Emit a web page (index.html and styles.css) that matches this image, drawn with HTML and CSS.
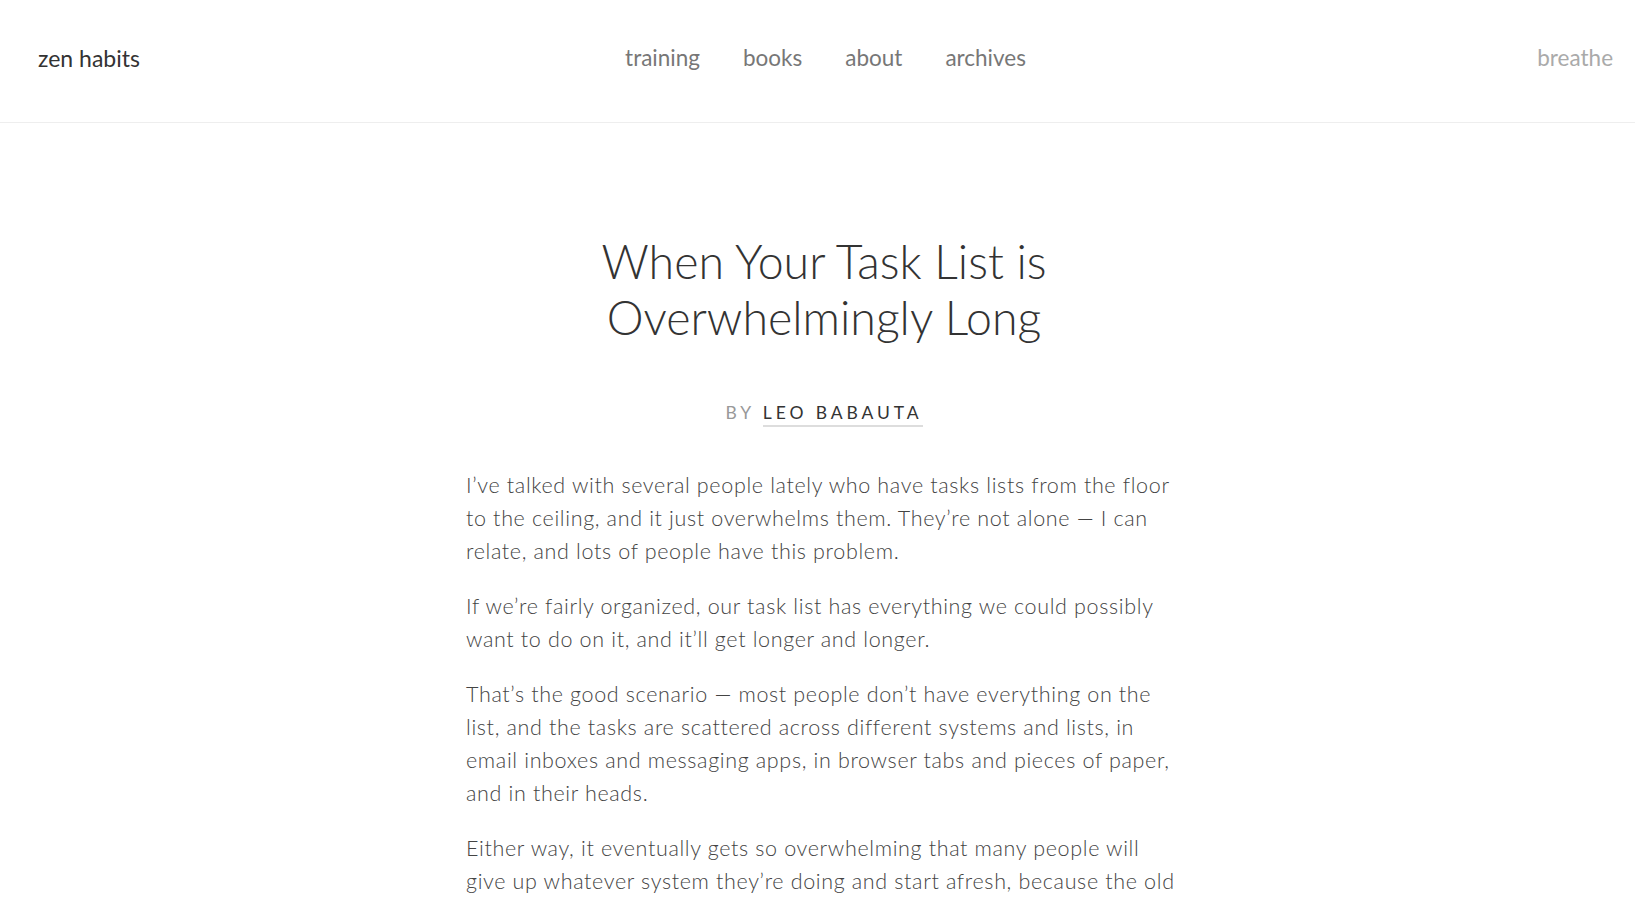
FILE: index.html
```html
<!DOCTYPE html>
<html lang="en">
<head>
<meta charset="utf-8">
<title>When Your Task List is Overwhelmingly Long</title>
<link rel="stylesheet" href="styles.css">
</head>
<body>
<header class="site-header">
  <a class="logo" href="#">zen habits</a>
  <nav class="main-nav">
    <a href="#">training</a>
    <a href="#">books</a>
    <a href="#">about</a>
    <a href="#">archives</a>
  </nav>
  <a class="breathe" href="#">breathe</a>
</header>
<main class="post">
  <h1 class="post-title">When Your Task List is<br>Overwhelmingly Long</h1>
  <p class="byline"><span class="by">BY</span> <a href="#">LEO BABAUTA</a></p>
  <div class="post-body">
    <p>I’ve talked with several people lately who have tasks lists from the floor<br>to the ceiling, and it just overwhelms them. They’re not alone — I can<br>relate, and lots of people have this problem.</p>
    <p>If we’re fairly organized, our task list has everything we could possibly<br>want to do on it, and it’ll get longer and longer.</p>
    <p>That’s the good scenario — most people don’t have everything on the<br>list, and the tasks are scattered across different systems and lists, in<br>email inboxes and messaging apps, in browser tabs and pieces of paper,<br>and in their heads.</p>
    <p>Either way, it eventually gets so overwhelming that many people will<br>give up whatever system they’re doing and start afresh, because the old</p>
  </div>
</main>
</body>
</html>
```
FILE: styles.css
```css
html, body {
  margin: 0;
  padding: 0;
  background: #fff;
}
body {
  font-family: "Lato", "Open Sans", sans-serif;
  color: #444;
  overflow: hidden;
  height: 905px;
}
a {
  text-decoration: none;
  color: inherit;
}
.site-header {
  display: flex;
  align-items: center;
  height: 114px;
  padding: 0 22px 8px 38px;
  border-bottom: 1px solid #eeeeee;
}
.logo {
  flex: 1;
  font-size: 23px;
  color: #333;
  margin-top: 2px;
}
.main-nav {
  display: flex;
  gap: 43px;
  font-size: 22.5px;
  color: #777;
}
.breathe {
  flex: 1;
  text-align: right;
  font-size: 22.5px;
  color: #aaa;
}
.post {
  width: 716px;
  margin: 0 auto;
  padding: 110px 0 0 13px;
}
.post-title {
  margin: 0;
  font-size: 46.5px;
  line-height: 56px;
  font-weight: 300;
  color: #333;
  text-align: center;
}
.byline {
  margin: 57px 0 0;
  text-align: center;
  font-size: 17.5px;
  letter-spacing: 3.9px;
  color: #999;
}
.byline a {
  color: #333;
  border-bottom: 2px solid #ddd;
  padding-bottom: 2px;
}
.post-body {
  margin-top: 46px;
}
.post-body p {
  margin: 0 0 22px;
  font-size: 21.5px;
  line-height: 33px;
  letter-spacing: 0.65px;
  font-weight: 300;
  color: #444;
  white-space: nowrap;
}
```
